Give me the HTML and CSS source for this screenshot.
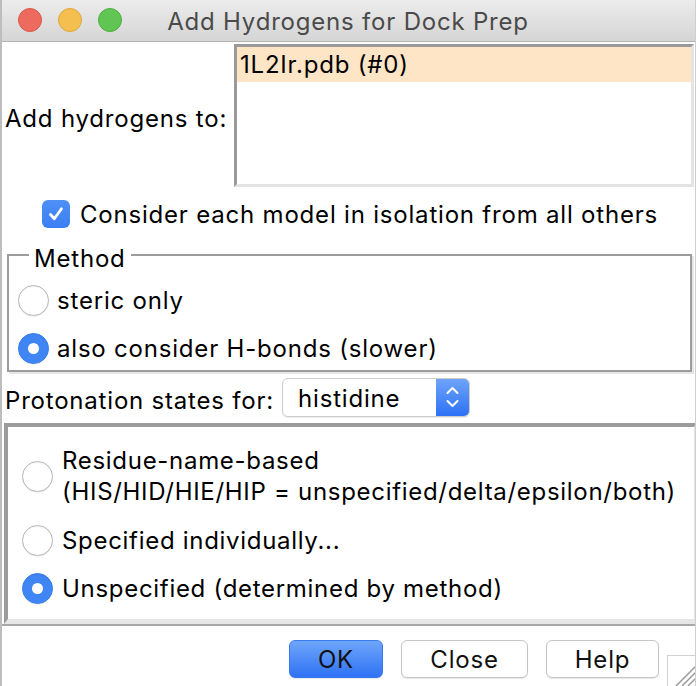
FILE: index.html
```html
<!DOCTYPE html>
<html>
<head>
<meta charset="utf-8">
<link rel="stylesheet" href="styles.css">
</head>
<body>
<div class="window">
  <div class="titlebar">
    <div class="lights">
      <span class="light red"></span>
      <span class="light yellow"></span>
      <span class="light green"></span>
    </div>
    <div class="title">Add Hydrogens for Dock Prep</div>
  </div>
  <div class="content">
    <div class="target-row">
      <div class="target-label">Add hydrogens to:</div>
      <div class="listbox">
        <div class="list-item selected">1L2Ir.pdb (#0)</div>
      </div>
    </div>
    <div class="check-row">
      <span class="checkbox">
        <svg width="28" height="28" viewBox="0 0 28 28"><path d="M8.5 14.5 L12.3 18.8 L19.5 8.8" fill="none" stroke="#fff" stroke-width="2.8" stroke-linecap="round" stroke-linejoin="round"/></svg>
      </span>
      <span>Consider each model in isolation from all others</span>
    </div>
    <div class="method-frame">
      <div class="legend">Method</div>
      <div class="radio-row"><span class="radio"></span><span>steric only</span></div>
      <div class="radio-row"><span class="radio on"></span><span>also consider H-bonds (slower)</span></div>
    </div>
    <div class="proton-row">
      <span class="proton-label">Protonation states for:</span>
      <div class="select">
        <span class="select-text">histidine</span>
        <span class="stepper">
          <svg width="33" height="39" viewBox="0 0 33 39"><path d="M11.5 15 L16.5 10 L21.5 15" fill="none" stroke="#fff" stroke-width="2" stroke-linecap="round" stroke-linejoin="round"/><path d="M11.5 23 L16.5 28 L21.5 23" fill="none" stroke="#fff" stroke-width="2" stroke-linecap="round" stroke-linejoin="round"/></svg>
        </span>
      </div>
    </div>
    <div class="proton-frame">
      <div class="radio-row two-line"><span class="radio"></span><span>Residue-name-based<br>(HIS/HID/HIE/HIP = unspecified/delta/epsilon/both)</span></div>
      <div class="radio-row"><span class="radio"></span><span>Specified individually...</span></div>
      <div class="radio-row"><span class="radio on"></span><span>Unspecified (determined by method)</span></div>
    </div>
    <div class="button-row">
      <button class="btn default">OK</button>
      <button class="btn">Close</button>
      <button class="btn">Help</button>
      <span class="grip">
        <svg width="28" height="30" viewBox="0 0 28 30"><path d="M8 30 L28 10 M14 30 L28 16 M20 30 L28 22" stroke="#9a9a9a" stroke-width="1.5"/></svg>
      </span>
    </div>
  </div>
</div>
</body>
</html>
```

FILE: styles.css
```css
* { box-sizing: border-box; }
html, body { margin: 0; padding: 0; background: #fff; }
body {
  font-family: Inter, "Noto Sans", "Liberation Sans", sans-serif;
  font-size: 24px;
  letter-spacing: 0.8px;
  color: #000;
}
.window {
  width: 696px;
  height: 686px;
  overflow: hidden;
  background: #fff;
  border-left: 2px solid #bdbdbd;
  border-right: 1px solid #cfcfcf;
  position: relative;
}
.titlebar {
  height: 42px;
  margin-left: -2px;
  margin-right: -1px;
  background: linear-gradient(#ececec, #d5d5d5);
  border-bottom: 1px solid #b3b3b3;
  display: flex;
  align-items: center;
  justify-content: center;
  position: relative;
}
.lights {
  position: absolute;
  left: 18px;
  top: 8px;
  display: flex;
  gap: 16px;
}
.light {
  width: 24px;
  height: 24px;
  border-radius: 50%;
  display: block;
}
.red { background: #ec6a5e; border: 1px solid #d9564a; }
.yellow { background: #f4bf4f; border: 1px solid #dea73b; }
.green { background: #61c554; border: 1px solid #4eae41; }
.title {
  font-size: 24px;
  color: #4a4a4a;
  padding-top: 1px;
}
.target-row {
  display: flex;
  align-items: center;
  margin-top: 2px;
  height: 143px;
}
.target-label {
  width: 232px;
  padding-left: 3px;
  padding-top: 6px;
}
.listbox {
  width: 460px;
  height: 143px;
  border-top: 3px solid #9a9a9a;
  border-left: 3px solid #9a9a9a;
  border-bottom: 3px solid #e4e4e4;
  border-right: 3px solid #e4e4e4;
  background: #fff;
}
.list-item {
  height: 35px;
  line-height: 35px;
  padding-left: 3px;
}
.list-item.selected { background: #fde5c6; }
.check-row {
  display: flex;
  align-items: center;
  gap: 10px;
  margin-left: 40px;
  margin-top: 13px;
  height: 28px;
}
.checkbox {
  width: 28px;
  height: 28px;
  border-radius: 6px;
  background: linear-gradient(#4f90f7, #3a7ef3);
  display: block;
  flex: none;
}
.checkbox svg { display: block; }
.method-frame {
  margin: 26px 0 0 5px;
  width: 685px;
  border: 2px solid #9c9c9c;
  box-shadow: 2px 2px 0 #e6e6e6;
  padding: 22px 0 0 9px;
  position: relative;
}
.legend {
  position: absolute;
  top: -11px;
  left: 20px;
  background: #fff;
  padding: 0 5px;
  line-height: 28px;
}
.radio-row {
  display: flex;
  align-items: center;
  gap: 8px;
  height: 44px;
}
.radio-row + .radio-row { margin-top: 4px; }
.radio {
  width: 31px;
  height: 31px;
  border-radius: 50%;
  border: 1px solid #b9b9b9;
  background: #fff;
  box-shadow: inset 0 1px 1px rgba(0,0,0,0.05), 0 0.5px 1px rgba(0,0,0,0.1);
  flex: none;
  display: flex;
  align-items: center;
  justify-content: center;
}
.radio.on {
  background: #3f86f4;
  border-color: #3a7ff0;
}
.radio.on::after {
  content: "";
  width: 11px;
  height: 11px;
  border-radius: 50%;
  background: #fff;
}
.proton-row {
  display: flex;
  align-items: center;
  gap: 8px;
  margin: 6px 0 0 3px;
  height: 39px;
}
.proton-label { padding-top: 5px; }
.select {
  width: 188px;
  height: 39px;
  border: 1px solid #cbcbcb;
  border-radius: 6px;
  display: flex;
  align-items: center;
  justify-content: space-between;
  overflow: hidden;
  box-shadow: 0 1px 1px rgba(0,0,0,0.08);
}
.select-text { padding-left: 15px; padding-top: 2px; }
.stepper {
  width: 33px;
  height: 39px;
  background: linear-gradient(#70a5f9, #2b6ff5);
  display: block;
}
.stepper svg { display: block; }
.proton-frame {
  margin: 6px 0 0 2px;
  width: 692px;
  height: 201px;
  border-top: 4px solid #9c9c9c;
  border-left: 4px solid #9c9c9c;
  border-right: 2px solid #e4e4e4;
  border-bottom: 5px solid #e6e6e6;
  padding: 17px 0 0 14px;
  letter-spacing: 0.7px;
}
.proton-frame .radio-row { height: 44px; gap: 9px; }
.proton-frame .radio-row.two-line {
  height: 64px;
  line-height: 31px;
}
.proton-frame .radio-row.two-line + .radio-row { margin-top: 10px; }
.button-row {
  border-top: 2px solid #a8a8a8;
  display: flex;
  align-items: flex-start;
  justify-content: flex-end;
  height: 62px;
  gap: 18px;
  padding-right: 36px;
  padding-top: 14px;
  position: relative;
}
.btn {
  font-family: inherit;
  font-size: 24px;
  letter-spacing: 0.8px;
  height: 38px;
  border: 1px solid #c6c6c6;
  border-radius: 6px;
  background: #fff;
  color: #111;
  box-shadow: 0 1px 1px rgba(0,0,0,0.1);
  padding: 0;
}
.btn:nth-child(1) { width: 94px; }
.btn:nth-child(2) { width: 127px; }
.btn:nth-child(3) { width: 113px; }
.btn.default {
  background: linear-gradient(#6ea6fa, #2f72f5);
  border-color: #3a7af2;
}
.grip {
  position: absolute;
  right: 0;
  bottom: 0;
  width: 28px;
  height: 31px;
  border-top: 1px solid #d0d0d0;
  border-left: 1px solid #d0d0d0;
  background: #fff;
}
.grip svg { display: block; }
```
